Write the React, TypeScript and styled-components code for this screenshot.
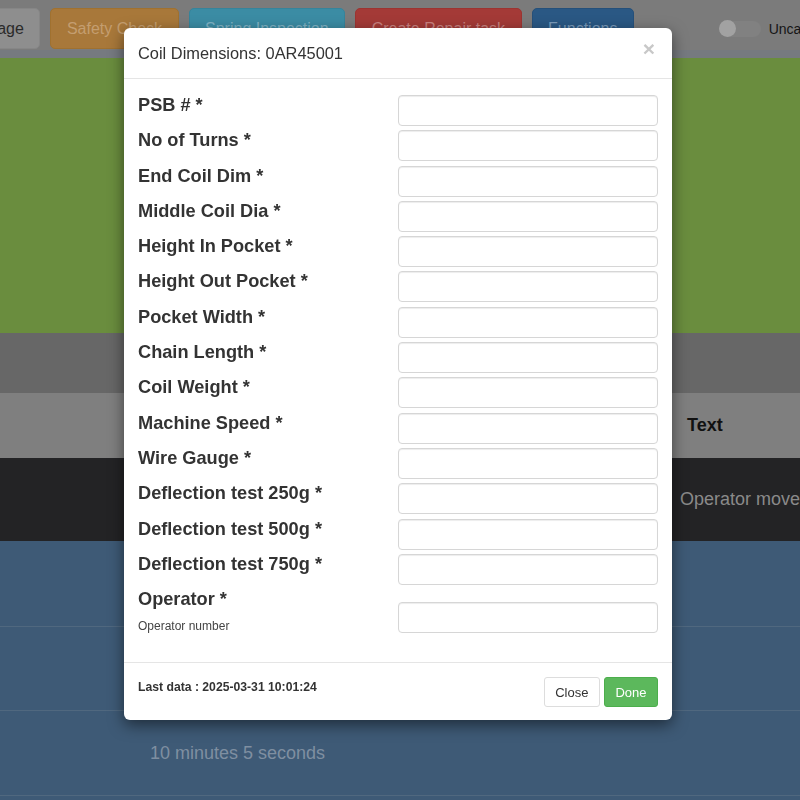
import React from 'react';
import styled, { createGlobalStyle } from 'styled-components';

// Types
interface ToolButtonProps {
    $bg: string;
    $fg: string;
    $border: string;
}

interface FieldConfig {
    label: string;
    help?: string;
}

// Config
const TOOL_BUTTONS = [
    { label: 'Page', bg: '#8e8e8e', fg: '#2a2a2a', border: '#868686' },
    { label: 'Safety Check', bg: '#a8783a', fg: '#c49e70', border: '#a0712f' },
    { label: 'Spring Inspection', bg: '#3b8ca4', fg: '#80b3c4', border: '#35849b' },
    { label: 'Create Repair task', bg: '#a43a37', fg: '#c98280', border: '#9c3431' },
    { label: 'Functions', bg: '#2a5884', fg: '#7a9bba', border: '#25507a' }
];

const FIELDS: FieldConfig[] = [
    { label: 'PSB # *' },
    { label: 'No of Turns *' },
    { label: 'End Coil Dim *' },
    { label: 'Middle Coil Dia *' },
    { label: 'Height In Pocket *' },
    { label: 'Height Out Pocket *' },
    { label: 'Pocket Width *' },
    { label: 'Chain Length *' },
    { label: 'Coil Weight *' },
    { label: 'Machine Speed *' },
    { label: 'Wire Gauge *' },
    { label: 'Deflection test 250g *' },
    { label: 'Deflection test 500g *' },
    { label: 'Deflection test 750g *' },
    { label: 'Operator *', help: 'Operator number' }
];

const GlobalStyle = createGlobalStyle`
  html, body {
    margin: 0;
    padding: 0;
    background: #3e5a76;
    font-family: "Liberation Sans", Arial, sans-serif;
    overflow: hidden;
  }
  * {
    box-sizing: border-box;
  }
`;

// Page behind the dialog (already dimmed by the backdrop)
const Page = styled.div`
  width: 800px;
  height: 800px;
  display: flex;
  flex-direction: column;
  overflow: hidden;
`;

const TopBar = styled.div`
  height: 50px;
  background: #7b7b7b;
  display: flex;
  align-items: center;
  flex-shrink: 0;
`;

const Toolbar = styled.div`
  display: flex;
  gap: 10px;
  margin-left: -30px;
  padding-top: 8px;
  align-self: flex-start;
`;

const ToolButton = styled.button<ToolButtonProps>`
  height: 41px;
  padding: 0 15.5px;
  border-radius: 5px;
  border: 1px solid ${p => p.$border};
  background: ${p => p.$bg};
  color: ${p => p.$fg};
  font-family: inherit;
  font-size: 16px;
  white-space: nowrap;
`;

const SwitchWrap = styled.div`
  margin-left: auto;
  display: flex;
  align-items: center;
  gap: 8px;
  margin-right: -59px;
  margin-top: 8px;
  align-self: flex-start;
  height: 41px;
`;

const Track = styled.div`
  width: 40px;
  height: 16px;
  border-radius: 8px;
  background: #818181;
  position: relative;
`;

const Knob = styled.div`
  position: absolute;
  left: -2px;
  top: -1px;
  width: 17px;
  height: 17px;
  border-radius: 50%;
  background: #a2a2a2;
`;

const SwitchLabel = styled.span`
  font-size: 14px;
  color: #151515;
`;

const Strip = styled.div`
  height: 8px;
  background: #767a80;
  flex-shrink: 0;
`;

const Banner = styled.div`
  height: 275px;
  background: #6a8d3e;
  flex-shrink: 0;
`;

const FilterBand = styled.div`
  height: 60px;
  background: #676767;
  flex-shrink: 0;
`;

const Table = styled.div`
  display: flex;
  flex-direction: column;
`;

const Row = styled.div<{ $bg: string; $h: number; $line?: boolean }>`
  display: grid;
  grid-template-columns: 135px 535px 1fr;
  align-items: center;
  height: ${p => p.$h}px;
  background: ${p => p.$bg};
  border-top: ${p => (p.$line ? '1px solid #50687f' : 'none')};
`;

const HeadCell = styled.div`
  padding: 0 17px;
  font-size: 18px;
  font-weight: bold;
  color: #111;
  white-space: nowrap;
`;

const Cell = styled.div<{ $fg: string }>`
  padding: 0 15px 0 10px;
  font-size: 18px;
  color: ${p => p.$fg};
  white-space: nowrap;
  overflow: hidden;
`;

const WideCell = styled(Cell)`
  padding-left: 15px;
`;

// Dialog
const Dialog = styled.div`
  position: fixed;
  top: 28px;
  left: 124px;
  width: 548px;
  background: #fff;
  border-radius: 6px;
  box-shadow: 0 5px 15px rgba(0, 0, 0, 0.5);
  color: #333;
`;

const Header = styled.div`
  padding: 15px 14px;
  border-bottom: 1px solid #e5e5e5;
  display: flex;
  justify-content: space-between;
  align-items: flex-start;
`;

const Title = styled.h4`
  margin: 0;
  font-size: 16.4px;
  font-weight: normal;
  line-height: 20px;
  color: #333;
`;

const CloseX = styled.button`
  border: none;
  background: none;
  padding: 0;
  margin-top: -5px;
  margin-right: 3px;
  font-family: inherit;
  font-size: 21px;
  font-weight: bold;
  line-height: 1;
  color: #c8c8c8;
`;

const Body = styled.div`
  padding: 16px 14px 29px;
  display: flex;
  flex-direction: column;
  gap: 4.3px;
`;

const FieldRow = styled.div`
  display: grid;
  grid-template-columns: 260px 260px;
  align-items: start;
`;

const LabelBlock = styled.div`
  display: flex;
  flex-direction: column;
`;

const Label = styled.label`
  font-size: 18.2px;
  font-weight: bold;
  line-height: 20px;
  color: #333;
`;

const Help = styled.span`
  margin-top: 10px;
  font-size: 12px;
  line-height: 14px;
  color: #444;
`;

const Input = styled.input<{ $offset: number }>`
  height: 31px;
  width: 260px;
  margin-top: ${p => p.$offset}px;
  border: 1px solid #d6d6d6;
  border-radius: 4px;
  box-shadow: inset 0 1px 1px rgba(0, 0, 0, 0.075);
  padding: 6px 12px;
  font-size: 14px;
`;

const Footer = styled.div`
  border-top: 1px solid #e5e5e5;
  padding: 14px 14px 13px;
  display: flex;
  justify-content: space-between;
  align-items: flex-start;
`;

const LastData = styled.span`
  font-size: 12.2px;
  font-weight: bold;
  color: #333;
  padding-top: 3px;
`;

const Actions = styled.div`
  display: flex;
  gap: 4px;
`;

const Btn = styled.button<{ $primary?: boolean }>`
  height: 30px;
  padding: 0 10.5px;
  border-radius: 3px;
  font-family: inherit;
  font-size: 13px;
  border: 1px solid ${p => (p.$primary ? '#4cae4c' : '#ddd')};
  background: ${p => (p.$primary ? '#5cb85c' : '#fff')};
  color: ${p => (p.$primary ? '#fff' : '#333')};
`;

const App: React.FC = () => {
    return (
        <>
            <GlobalStyle />
            <Page>
                <TopBar>
                    <Toolbar>
                        {TOOL_BUTTONS.map(b => (
                            <ToolButton key={b.label} $bg={b.bg} $fg={b.fg} $border={b.border}>
                                {b.label}
                            </ToolButton>
                        ))}
                    </Toolbar>
                    <SwitchWrap>
                        <Track>
                            <Knob />
                        </Track>
                        <SwitchLabel>Uncategorized</SwitchLabel>
                    </SwitchWrap>
                </TopBar>
                <Strip />
                <Banner />
                <FilterBand />
                <Table>
                    <Row $bg="#7f7f7f" $h={65}>
                        <HeadCell />
                        <HeadCell />
                        <HeadCell>Text</HeadCell>
                    </Row>
                    <Row $bg="#232325" $h={83}>
                        <Cell $fg="#8a8a8a" />
                        <Cell $fg="#8a8a8a" />
                        <Cell $fg="#8a8a8a">Operator moved</Cell>
                    </Row>
                    <Row $bg="#3e5a76" $h={85}>
                        <Cell $fg="#7f8fa1" />
                    </Row>
                    <Row $bg="#3e5a76" $h={84} $line>
                        <Cell $fg="#7f8fa1" />
                    </Row>
                    <Row $bg="#3e5a76" $h={85} $line>
                        <Cell $fg="#7f8fa1" />
                        <WideCell $fg="#7f8fa1">10 minutes 5 seconds</WideCell>
                    </Row>
                    <Row $bg="#3e5a76" $h={40} $line />
                </Table>
            </Page>

            <Dialog>
                <Header>
                    <Title>Coil Dimensions: 0AR45001</Title>
                    <CloseX>×</CloseX>
                </Header>
                <Body>
                    {FIELDS.map(f => (
                        <FieldRow key={f.label}>
                            <LabelBlock>
                                <Label>{f.label}</Label>
                                {f.help && <Help>{f.help}</Help>}
                            </LabelBlock>
                            <Input type="text" $offset={f.help ? 13 : 0} />
                        </FieldRow>
                    ))}
                </Body>
                <Footer>
                    <LastData>Last data : 2025-03-31 10:01:24</LastData>
                    <Actions>
                        <Btn>Close</Btn>
                        <Btn $primary>Done</Btn>
                    </Actions>
                </Footer>
            </Dialog>
        </>
    );
};

export default App;
